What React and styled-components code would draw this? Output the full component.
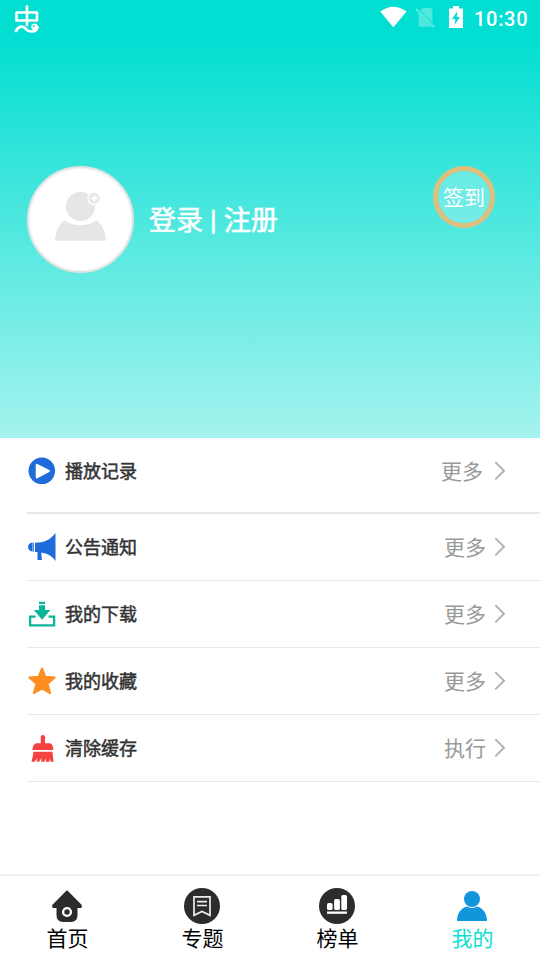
import React from 'react';
import styled, { createGlobalStyle } from 'styled-components';

const GlobalStyle = createGlobalStyle`
  * { box-sizing: border-box; }
  body {
    margin: 0;
    background: #fff;
    font-family: Roboto, "Noto Sans CJK SC", sans-serif;
  }
  svg { display: block; flex: none; }
`;

const Screen = styled.div`
  width: 540px;
  height: 960px;
  display: flex;
  flex-direction: column;
  overflow: hidden;
`;

const Hero = styled.header`
  height: 438px;
  flex: none;
  background: linear-gradient(to bottom, #02ded2 0, #02ded2 36px, #a5f3ee 100%);
  color: #fff;
`;

const StatusBar = styled.div`
  height: 36px;
  display: flex;
  align-items: center;
  padding: 0 12px 0 14px;
`;

const StatusIcons = styled.div`
  margin-left: auto;
  display: flex;
  align-items: center;
  padding-bottom: 2px;
`;

const SimSlot = styled.div`
  margin: 0 13px 0 8px;
`;

const Clock = styled.span`
  width: 54px;
  margin-left: 11px;
  font-size: 20px;
  font-weight: 500;
  line-height: 34px;
  letter-spacing: 0.7px;
  padding-top: 4px;
  white-space: nowrap;
`;

const Profile = styled.div`
  display: flex;
  align-items: center;
  height: 107px;
  margin-top: 130px;
  padding: 0 45px 0 27px;
`;

const Avatar = styled.div`
  width: 107px;
  height: 107px;
  border: 2px solid #dfe3e3;
  border-radius: 50%;
  background: #fff;
  display: flex;
  align-items: center;
  justify-content: center;
  box-shadow: inset 0 0 2px #ddd;
`;

const Login = styled.div`
  margin-left: 15px;
  padding-top: 2px;
  font-size: 27px;
  -webkit-text-stroke: 0.6px #fff;
  line-height: 40px;
  word-spacing: 0.4px;
  white-space: pre;
`;

const SignIn = styled.button`
  align-self: flex-start;
  margin-left: auto;
  width: 62px;
  height: 62px;
  padding: 2px 0 0;
  border: 5px solid #dfbf7e;
  border-radius: 50%;
  background: rgba(255, 255, 255, 0.23);
  background-clip: padding-box;
  color: #fff;
  font: 21px/50px Roboto, "Noto Sans CJK SC", sans-serif;
  white-space: nowrap;
`;

const List = styled.main`
  flex: 1;
  padding-left: 27px;
`;

const Row = styled.div`
  display: flex;
  align-items: center;
  height: ${p => (p.$first ? 76 : 67)}px;
  padding-right: 34px;
  padding-bottom: ${p => (p.$first ? 8 : 0)}px;
  border-bottom: ${p => (p.$first ? 2 : 1)}px solid #e8e8e8;
`;

const Label = styled.span`
  margin-left: 8px;
  padding-top: 2px;
  font-size: 18px;
  -webkit-text-stroke: 0.5px #333;
  line-height: 30px;
  color: #333;
`;

const More = styled.span`
  margin-left: auto;
  margin-right: ${p => (p.$first ? 11 : 8)}px;
  padding-top: 2px;
  font-size: 21px;
  line-height: 32px;
  color: #999;
`;

const TabBar = styled.nav`
  display: flex;
  height: 86px;
  flex: none;
  border-top: 2px solid #f2f2f2;
`;

const Tab = styled.div`
  flex: 1;
  display: flex;
  flex-direction: column;
  align-items: center;
  padding-top: 12px;
  font-size: 21px;
  line-height: 30px;
  color: ${p => (p.$active ? '#0cdfd2' : '#000')};

  svg { margin-right: 1px; }
`;

const BugLogo = () => (
  <svg width="26" height="32" viewBox="0 0 26 32" fill="none" stroke="#fff" strokeWidth="2.7" strokeLinecap="round">
    <path d="M13 4.5V23M2.5 10.5H23V18.5H2.5Z" strokeLinejoin="round" />
    <path d="M2 29C5 23.5 9 23.5 12 27C15 31 23 30 23.5 25" />
    <circle cx="20.5" cy="24.7" r="3.2" fill="#fff" stroke="none" />
    <circle cx="19.7" cy="24.1" r="1" fill="#02ded2" stroke="none" />
  </svg>
);

const WifiIcon = () => (
  <svg width="28" height="22" viewBox="0 0 28 22">
    <path d="M.2 5.5Q13.4-3.9 26.6 5.5L13.4 21.2Z" fill="#fff" />
  </svg>
);

const NoSimIcon = () => (
  <svg width="20" height="22" viewBox="0 0 20 22">
    <path d="M7 2H14.5Q16.5 2 16.5 4V17L4 4.6ZM2.5 6.5L16 20.8H4.5Q2.5 20.8 2.5 19Z" fill="#4fe8df" />
    <path d="M0 3L18.4 21.4" stroke="#5eeae1" strokeWidth="1.9" />
  </svg>
);

const BatteryIcon = () => (
  <svg width="14" height="22" viewBox="0 0 14 22">
    <path d="M4 0H10V2.5H14V22H0V2.5H4Z" fill="#fff" />
    <path d="M8.5 5L3 13H6.3L5.5 19L11 11H7.8Z" fill="#02ded2" />
  </svg>
);

const AvatarIcon = () => (
  <svg width="103" height="103" viewBox="0 0 103 103" fill="#e6e6e6">
    <circle cx="51.5" cy="38.5" r="14.5" />
    <path d="M26 72.7C26.5 63 30 56.5 35.5 52.2C44 59 59 59 67.5 52.2C73 56.5 76.5 63 77 72.7Z" />
    <circle cx="65.3" cy="30.3" r="6.2" stroke="#fff" strokeWidth="1.4" />
    <path d="M65.3 27V33.6M62 30.3H68.6" stroke="#fff" strokeWidth="1.8" />
  </svg>
);

const PlayIcon = () => (
  <svg width="30" height="30" viewBox="0 0 30 30">
    <circle cx="14.8" cy="14.8" r="13.3" fill="#1e6bd9" />
    <path d="M9.9 9L21.7 15L9.9 21.3Z" fill="#fff" stroke="#fff" strokeWidth="2.4" strokeLinejoin="round" />
  </svg>
);

const HornIcon = () => (
  <svg width="30" height="30" viewBox="0 0 30 30" fill="#1e6bd9">
    <path d="M5.6 10.6V19.6C-.4 19.8-.4 10.4 5.6 10.6ZM6.2 10.8H7V19.7H6.2Z" />
    <path d="M8 10.7C17 10.7 23 8 28.5 1V29C25 23.5 19.5 21.5 14.4 20.6V23.5L15 28H10.5V20.3L8 19.7Z" />
  </svg>
);

const DownloadIcon = () => (
  <svg width="30" height="30" viewBox="0 0 30 30" fill="#0cb59a">
    <path d="M12 2.8H18.1V5H12ZM12 6.3H18.1V11H23.4L15.1 20.8L6.8 11H12Z" />
    <path d="M8.6 17.6H3.1V26.4H27.1V17.6H21.6" fill="none" stroke="#0cb59a" strokeWidth="2.3" />
  </svg>
);

const StarIcon = () => (
  <svg width="30" height="30" viewBox="0 0 30 30">
    <path
      d="M15 2.5L18.4 10.8L27.7 11.6L20.6 17.7L23.1 27.2L15 22.4L6.9 27.2L9.4 17.7L2.3 11.6L11.6 10.8Z"
      fill="#ff8e20"
      stroke="#ff8e20"
      strokeWidth="2"
      strokeLinejoin="round"
    />
  </svg>
);

const BroomIcon = () => (
  <svg width="30" height="30" viewBox="0 0 30 30" fill="#f5413f">
    <path d="M13.7 3.6Q13.7 2 15.8 2T18 3.6V10.2H22.5Q26 10.2 26.4 17H5.3Q6 10.2 9.7 10.2H13.7Z" />
    <path d="M6.4 18.8H25.4L26.6 28.7H23.9L22.8 25.2L22.5 28.7H18.9L18.5 25.2L17.3 28.7H14.2L14.5 25L12 28.7H9.5L10.6 25L7.5 28.7H4.4C5.6 25 6.2 22 6.4 18.8Z" />
  </svg>
);

const Chevron = () => (
  <svg width="12" height="20" viewBox="0 0 12 20" fill="none" stroke="#b3b3b3" strokeWidth="2">
    <path d="M1.3 1.1L10 9.7L1.3 18.4" />
  </svg>
);

const HomeIcon = () => (
  <svg width="36" height="36" viewBox="0 0 36 36">
    <path d="M18 3.5L31.8 17.5V19H4.2V17.5Z" fill="#2c2c2c" stroke="#2c2c2c" strokeWidth="2" strokeLinejoin="round" />
    <path d="M7.5 18H28.5V27Q28.5 34 22 34H14Q7.5 34 7.5 27Z" fill="#2c2c2c" />
    <circle cx="18" cy="24" r="3.9" fill="none" stroke="#fff" strokeWidth="2.3" />
  </svg>
);

const TopicIcon = () => (
  <svg width="36" height="36" viewBox="0 0 36 36" fill="none" stroke="#eee" strokeWidth="1.7">
    <circle cx="18" cy="18" r="18" fill="#2c2c2c" stroke="none" />
    <path d="M10 8.8H26V27.3L18 23.4L10 27.3ZM13 13.6H23M13 17.5H23" />
  </svg>
);

const RankIcon = () => (
  <svg width="36" height="36" viewBox="0 0 36 36" fill="#fff">
    <circle cx="18" cy="18" r="18" fill="#2c2c2c" />
    <rect x="8" y="15" width="5.6" height="7" rx="1.6" />
    <rect x="15.1" y="11" width="5.8" height="11" rx="1.6" />
    <rect x="22.3" y="7" width="5.7" height="15" rx="1.6" />
    <rect x="8" y="23.5" width="20" height="2.3" />
  </svg>
);

const MineIcon = () => (
  <svg width="36" height="36" viewBox="0 0 36 36" fill="#1296db">
    <circle cx="18" cy="11" r="8" />
    <path d="M3 33C3 25 7.5 20.3 12.7 18.6Q18 21.5 23.3 18.6C28.5 20.3 33 25 33 33Z" />
  </svg>
);

const rows = [
  { label: '播放记录', action: '更多', Icon: PlayIcon },
  { label: '公告通知', action: '更多', Icon: HornIcon },
  { label: '我的下载', action: '更多', Icon: DownloadIcon },
  { label: '我的收藏', action: '更多', Icon: StarIcon },
  { label: '清除缓存', action: '执行', Icon: BroomIcon },
];

const tabs = [
  { label: '首页', Icon: HomeIcon },
  { label: '专题', Icon: TopicIcon },
  { label: '榜单', Icon: RankIcon },
  { label: '我的', Icon: MineIcon, active: true },
];

export default function App() {
  return (
    <Screen>
      <GlobalStyle />
      <Hero>
        <StatusBar>
          <BugLogo />
          <StatusIcons>
            <WifiIcon />
            <SimSlot><NoSimIcon /></SimSlot>
            <BatteryIcon />
            <Clock>10:30</Clock>
          </StatusIcons>
        </StatusBar>
        <Profile>
          <Avatar><AvatarIcon /></Avatar>
          <Login>登录 | 注册</Login>
          <SignIn>签到</SignIn>
        </Profile>
      </Hero>
      <List>
        {rows.map(({ label, action, Icon }, i) => (
          <Row key={label} $first={i === 0}>
            <Icon />
            <Label>{label}</Label>
            <More $first={i === 0}>{action}</More>
            <Chevron />
          </Row>
        ))}
      </List>
      <TabBar>
        {tabs.map(({ label, Icon, active }) => (
          <Tab key={label} $active={active}>
            <Icon />
            {label}
          </Tab>
        ))}
      </TabBar>
    </Screen>
  );
}
